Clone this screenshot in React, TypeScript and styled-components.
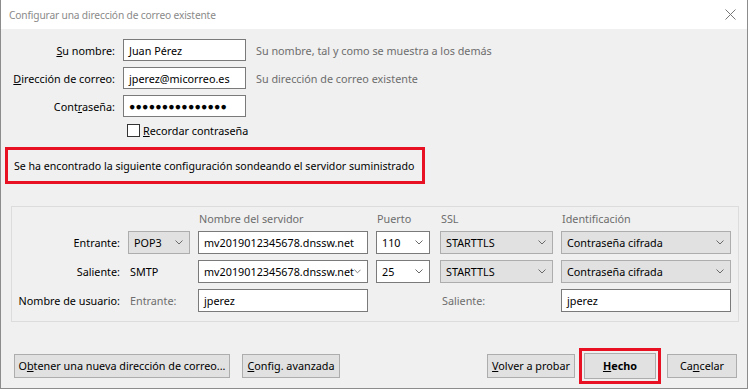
import React from 'react';
import styled, { createGlobalStyle } from 'styled-components';

const FONT = `"Noto Sans", "Open Sans", sans-serif`;

const GlobalStyle = createGlobalStyle`
  body {
    margin: 0;
    background: #ffffff;
    font-family: ${FONT};
    font-size: 10.8px;
    color: #000;
  }
`;

const Window = styled.div`
  width: 748px;
  height: 389px;
  box-sizing: border-box;
  border: 1px solid #8c8c8c;
  border-top: none;
  display: flex;
  flex-direction: column;
  background: #f0f0f0;
`;

const TitleBar = styled.div`
  height: 29px;
  flex: none;
  background: #fff;
  display: flex;
  align-items: center;
  padding: 0 6px 0 8px;
`;

const Title = styled.span`
  color: #8a8a8a;
  font-size: 10.2px;
  letter-spacing: -0.15px;
`;

const CloseBtn = styled.svg`
  margin-left: auto;
  margin-right: 5px;
`;

const Body = styled.div`
  flex: 1;
  padding: 10px 4px 0 4px;
  display: flex;
  flex-direction: column;
`;

const FormGrid = styled.div`
  display: grid;
  grid-template-columns: 110px 123px auto;
  grid-template-rows: 22px 22px 22px 15px;
  column-gap: 8px;
  row-gap: 6px;
  align-items: center;
`;

const Label = styled.label`
  text-align: right;
  white-space: nowrap;
`;

const Hint = styled.span`
  color: #6d6d6d;
  margin-left: 2px;
  white-space: nowrap;
`;

const TextBox = styled.div<{ $w?: number }>`
  box-sizing: border-box;
  height: ${p => (p.$w ? 23 : 22)}px;
  width: ${p => (p.$w ? `${p.$w}px` : 'auto')};
  background: #fff;
  border: 1px solid #7a7a7a;
  display: flex;
  align-items: center;
  padding: 0 5px;
  white-space: nowrap;
  overflow: hidden;
`;

const Dots = styled.span`
  font-family: "Liberation Sans", Arial, sans-serif;
  font-size: 10.5px;
  letter-spacing: 0.2px;
`;

const CheckRow = styled.div`
  grid-column: 2 / 4;
  height: 15px;
  display: flex;
  align-items: center;
  gap: 3px;
  padding-left: 4px;
`;

const CheckBox = styled.span`
  width: 13px;
  height: 13px;
  box-sizing: border-box;
  border: 1px solid #333;
  background: #fff;
`;

const Highlight = styled.div<{ $pad?: number }>`
  box-sizing: border-box;
  border: 3px solid #e81123;
  display: flex;
  align-items: center;
  justify-content: center;
  padding: ${p => p.$pad ?? 0}px;
`;

const Notice = styled(Highlight)`
  margin-top: 9px;
  width: 420px;
  height: 37px;
  justify-content: flex-start;
  padding-left: 6px;
  white-space: nowrap;
  font-size: 10.6px;
`;

const Group = styled.div`
  margin: 22px 0 0 6px;
  width: 728px;
  box-sizing: border-box;
  border: 1px solid #dcdcdc;
  padding: 5px 6px 9px 0;
  display: grid;
  grid-template-columns: 108px 62px 170px 56px 113px 170px;
  grid-template-rows: 13px repeat(3, 23px);
  column-gap: 8px;
  row-gap: 6px;
  align-items: center;
`;

const ColHead = styled.span<{ $col: number }>`
  grid-column: ${p => p.$col};
  color: #6d6d6d;
  line-height: 13px;
  padding-left: 1px;
  white-space: nowrap;
`;

const RowLabel = styled.span`
  grid-column: 1;
  text-align: right;
  white-space: nowrap;
`;

const Plain = styled.span<{ $muted?: boolean }>`
  color: ${p => (p.$muted ? '#6d6d6d' : '#000')};
  padding-left: 2px;
  white-space: nowrap;
`;

const Combo = styled.div<{ $editable?: boolean; $w?: number }>`
  box-sizing: border-box;
  height: 23px;
  width: ${p => (p.$w ? `${p.$w}px` : 'auto')};
  background: ${p => (p.$editable ? '#fff' : '#e1e1e1')};
  border: 1px solid ${p => (p.$editable ? '#7a7a7a' : '#adadad')};
  display: flex;
  align-items: center;
  padding: 0 6px 0 5px;
  white-space: nowrap;
  span {
    flex: 1;
  }
`;

const Chevron = () => (
  <svg width="8" height="5" viewBox="0 0 8 5">
    <path d="M0.5 0.5 L4 4 L7.5 0.5" fill="none" stroke="#6a6a6a" strokeWidth="1" />
  </svg>
);

const ButtonBar = styled.div`
  margin-top: 25px;
  padding: 0 6px 0 9px;
  display: flex;
  align-items: center;
  height: 37px;
`;

const Button = styled.button<{ $w: number; $h?: number; $strong?: boolean; $gap?: number }>`
  box-sizing: border-box;
  width: ${p => p.$w}px;
  height: ${p => p.$h ?? 24}px;
  margin-right: ${p => p.$gap ?? 0}px;
  background: #e1e1e1;
  border: 1px solid #adadad;
  font-family: ${FONT};
  font-size: 10.8px;
  font-weight: ${p => (p.$strong ? 700 : 400)};
  color: #000;
  padding: 0;
  white-space: nowrap;
`;

const Spacer = styled.div`
  flex: 1;
`;

export default function App() {
  return (
    <>
      <GlobalStyle />
      <Window>
        <TitleBar>
          <Title>Configurar una dirección de correo existente</Title>
          <CloseBtn width="11" height="11" viewBox="0 0 11 11">
            <path d="M0.5 0.5 L10.5 10.5 M10.5 0.5 L0.5 10.5" stroke="#777" strokeWidth="1" />
          </CloseBtn>
        </TitleBar>
        <Body>
          <FormGrid>
            <Label><u>S</u>u nombre:</Label>
            <TextBox>Juan Pérez</TextBox>
            <Hint>Su nombre, tal y como se muestra a los demás</Hint>

            <Label><u>D</u>irección de correo:</Label>
            <TextBox>jperez@micorreo.es</TextBox>
            <Hint>Su dirección de correo existente</Hint>

            <Label>Cont<u>r</u>aseña:</Label>
            <TextBox><Dots>●●●●●●●●●●●●●●●</Dots></TextBox>
            <span />

            <CheckRow>
              <CheckBox />
              <span><u>R</u>ecordar contraseña</span>
            </CheckRow>
          </FormGrid>

          <Notice>Se ha encontrado la siguiente configuración sondeando el servidor suministrado</Notice>

          <Group>
            <ColHead $col={3}>Nombre del servidor</ColHead>
            <ColHead $col={4}>Puerto</ColHead>
            <ColHead $col={5}>SSL</ColHead>
            <ColHead $col={6}>Identificación</ColHead>

            <RowLabel>Entrante:</RowLabel>
            <Combo><span>POP3</span><Chevron /></Combo>
            <TextBox $w={170}>mv2019012345678.dnssw.net</TextBox>
            <Combo $editable $w={54}><span>110</span><Chevron /></Combo>
            <Combo><span>STARTTLS</span><Chevron /></Combo>
            <Combo><span>Contraseña cifrada</span><Chevron /></Combo>

            <RowLabel>Saliente:</RowLabel>
            <Plain>SMTP</Plain>
            <Combo $editable><span>mv2019012345678.dnssw.net</span><Chevron /></Combo>
            <Combo $editable $w={54}><span>25</span><Chevron /></Combo>
            <Combo><span>STARTTLS</span><Chevron /></Combo>
            <Combo><span>Contraseña cifrada</span><Chevron /></Combo>

            <RowLabel>Nombre de usuario:</RowLabel>
            <Plain $muted>Entrante:</Plain>
            <TextBox $w={170}>jperez</TextBox>
            <span />
            <Plain $muted>Saliente:</Plain>
            <TextBox $w={170}>jperez</TextBox>
          </Group>

          <ButtonBar>
            <Button $w={216} $gap={12}>O<u>b</u>tener una nueva dirección de correo...</Button>
            <Button $w={98}><u>C</u>onfig. avanzada</Button>
            <Spacer />
            <Button $w={88} $gap={4}><u>V</u>olver a probar</Button>
            <Highlight $pad={2}>
              <Button $w={72} $h={26} $strong><u>H</u>echo</Button>
            </Highlight>
            <Button $w={70} style={{ marginLeft: 6 }}>Ca<u>n</u>celar</Button>
          </ButtonBar>
        </Body>
      </Window>
    </>
  );
}
